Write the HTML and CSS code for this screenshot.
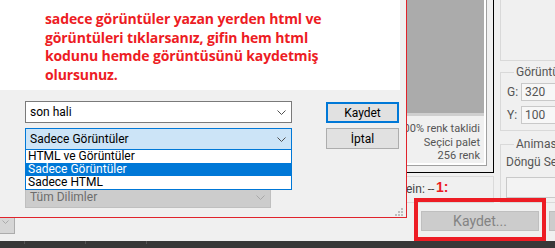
FILE: index.html
```html
<!DOCTYPE html>
<html lang="tr">
<head>
<meta charset="utf-8">
<title>Kaydet</title>
<link rel="stylesheet" href="styles.css">
</head>
<body>
<div class="screen">
  <div class="main">
    <div class="left">
      <div class="dialog">
        <div class="banner">
          <p class="note">sadece görüntüler yazan yerden html ve<br>görüntüleri tıklarsanız, gifin hem html<br>kodunu hemde görüntüsünü kaydetmiş<br>olursunuz.</p>
        </div>
        <div class="dbody">
          <div class="fields">
            <div class="combo">
              <span>son hali</span>
              <svg class="chev" width="9" height="5" viewBox="0 0 9 5"><polyline points="0.5,0.5 4.5,4.5 8.5,0.5" fill="none" stroke="#505050" stroke-width="1"/></svg>
            </div>
            <div class="combo open">
              <span>Sadece Görüntüler</span>
              <svg class="chev" width="9" height="5" viewBox="0 0 9 5"><polyline points="0.5,0.5 4.5,4.5 8.5,0.5" fill="none" stroke="#505050" stroke-width="1"/></svg>
              <div class="list">
                <div class="item">HTML ve Görüntüler</div>
                <div class="item sel">Sadece Görüntüler</div>
                <div class="item">Sadece HTML</div>
              </div>
            </div>
            <div class="combo disabled">
              <span>Tüm Dilimler</span>
              <svg class="chev" width="9" height="5" viewBox="0 0 9 5"><polyline points="0.5,0.5 4.5,4.5 8.5,0.5" fill="none" stroke="#a8a8a8" stroke-width="1"/></svg>
            </div>
          </div>
          <div class="btns">
            <div class="btn default">Kaydet</div>
            <div class="btn">İptal</div>
          </div>
        </div>
        <div class="dfoot">
          <svg width="8" height="8" viewBox="0 0 8 8" fill="#bdbdbd"><rect x="6" y="0" width="2" height="2"/><rect x="3" y="3" width="2" height="2"/><rect x="6" y="3" width="2" height="2"/><rect x="0" y="6" width="2" height="2"/><rect x="3" y="6" width="2" height="2"/><rect x="6" y="6" width="2" height="2"/></svg>
        </div>
      </div>
      <div class="under">
        <div class="stub">
          <svg width="7" height="4" viewBox="0 0 7 4"><polyline points="0.5,0.5 3.5,3.5 6.5,0.5" fill="none" stroke="#ababab" stroke-width="1"/></svg>
        </div>
      </div>
    </div>
    <div class="right">
      <div class="upper">
        <div class="pvcol">
          <div class="preview">
            <div class="pv-inner">
              <div class="pv-face">
                <div class="pv-img"></div>
                <div class="pv-info">
                  <span>100% renk taklidi</span>
                  <span>Seçici palet</span>
                  <span>256 renk</span>
                </div>
              </div>
            </div>
          </div>
          <div class="sizebox"><span class="sizetext">ein: --</span></div>
        </div>
        <div class="panel">
          <div class="topbox"></div>
          <fieldset class="grp">
            <legend>Görüntü Boyutu</legend>
            <div class="row"><span class="lbl">G:</span><span class="inp">320</span></div>
            <div class="row second"><span class="lbl">Y:</span><span class="inp">100</span></div>
          </fieldset>
          <fieldset class="grp anim">
            <legend>Animasyon</legend>
            <div class="loop">Döngü Seçenekleri:</div>
            <div class="loopbox"></div>
          </fieldset>
        </div>
      </div>
      <div class="btnrow">
        <div class="pbtn">Kaydet...</div>
        <div class="pbtn second">İptal</div>
      </div>
      <div class="redbox"></div>
      <span class="mark">1:</span>
    </div>
  </div>
  <div class="taskbar">
    <div class="tb-seg first"></div>
    <div class="tb-seg"></div>
    <div class="tb-seg"></div>
  </div>
</div>
</body>
</html>
```

FILE: styles.css
```css
* { box-sizing: border-box; }
html, body { margin: 0; padding: 0; }
body {
  background: #f0f0f0;
  font-family: Roboto, "Noto Sans", sans-serif;
  font-size: 12px;
  color: #000;
}
.screen {
  width: 555px;
  height: 248px;
  display: flex;
  flex-direction: column;
  overflow: hidden;
}
.main { display: flex; height: 241px; }

/* ---------- dialog ---------- */
.left { width: 407px; flex-shrink: 0; display: flex; flex-direction: column; }
.dialog {
  height: 218px;
  border-right: 1px solid #e0232b;
  border-bottom: 1px solid #e0232b;
  background: #f0f0f0;
  display: flex;
  flex-direction: column;
}
.banner {
  width: 400px;
  height: 90px;
  flex-shrink: 0;
  background: #fff;
  padding: 10px 0 0 45px;
}
.note {
  margin: 0;
  font-family: "Open Sans", sans-serif;
  font-weight: bold;
  font-size: 14px;
  line-height: 18.5px;
  letter-spacing: -0.12px;
  color: #ed1c24;
  white-space: nowrap;
}
.dbody {
  flex: 1;
  display: flex;
  gap: 34px;
  padding: 11px 0 0 25px;
}
.fields { width: 267px; display: flex; flex-direction: column; }
.combo {
  position: relative;
  height: 22px;
  border: 1px solid #7a7a7a;
  background: #fff;
  display: flex;
  align-items: center;
  justify-content: space-between;
  padding: 0 5px 0 4px;
  white-space: nowrap;
}
.combo.open {
  margin-top: 5px;
  border-color: #0078d7;
  background: #cce4f7;
}
.combo.disabled {
  margin-top: 36px;
  width: 246px;
  background: #cccccc;
  border-color: #bfbfbf;
  color: #6d6d6d;
}
.chev { display: block; }
.list {
  position: absolute;
  top: calc(100% + 1px);
  left: -1px;
  width: 267px;
  background: #fff;
  border: 1px solid #0078d7;
  border-top: none;
  z-index: 2;
}
.item { height: 13px; line-height: 13px; padding-left: 2px; }
.item.sel { background: #0078d7; color: #fff; }

.btns { display: flex; flex-direction: column; gap: 5px; padding-top: 1px; }
.btn {
  width: 73px;
  height: 21px;
  background: #e1e1e1;
  border: 1px solid #adadad;
  display: flex;
  align-items: center;
  justify-content: center;
}
.btn.default { border: 2px solid #0078d7; }
.dfoot {
  display: flex;
  justify-content: flex-end;
  padding: 0 3px 1px 0;
}
.dfoot svg { display: block; }

.under { flex: 1; }
.stub {
  width: 15px;
  height: 16px;
  background: #d6d6d6;
  border-right: 1px solid #acacac;
  border-bottom: 1px solid #acacac;
  padding: 2px 0 0 2px;
}
.stub svg { display: block; }

/* ---------- background application ---------- */
.right {
  position: relative;
  width: 148px;
  flex-shrink: 0;
  display: flex;
  flex-direction: column;
}
.upper { display: flex; align-items: flex-start; }
.pvcol { width: 87px; display: flex; flex-direction: column; }
.preview {
  height: 173px;
  border-right: 1px solid #000;
  border-bottom: 1px solid #000;
}
.pv-inner {
  width: 80px;
  height: 166px;
  border-right: 1px solid #a0a0a0;
  border-bottom: 1px solid #a0a0a0;
}
.pv-face {
  height: 100%;
  border-right: 2px solid #fff;
  border-bottom: 2px solid #fff;
  display: flex;
  flex-direction: column;
  overflow: hidden;
}
.pv-img {
  height: 116px;
  flex-shrink: 0;
  background: #ababab;
  border-bottom: 3px solid #cfcfcf;
}
.pv-info {
  display: flex;
  flex-direction: column;
  align-items: flex-end;
  padding: 6px 4px 0 0;
  font-size: 11px;
  line-height: 13.5px;
  color: #555;
}
.pv-info span { white-space: nowrap; flex-shrink: 0; }
.sizebox {
  margin-top: 3px;
  height: 27px;
  border: 1px solid #dadada;
  border-left: none;
  padding-top: 5px;
  white-space: nowrap;
  overflow: hidden;
  color: #444;
  line-height: 14px;
}
.sizetext { margin-left: -1px; }

.panel { width: 61px; padding-left: 6px; overflow: hidden; }
.topbox {
  height: 61px;
  border-left: 1px solid #d9d9d9;
  border-bottom: 1px solid #d9d9d9;
}
.grp {
  margin: 4px 0 0 0;
  padding: 0 0 6px 6px;
  border: 1px solid #d9d9d9;
  border-right: none;
  min-width: 0;
  width: 80px;
  color: #555;
}
.grp legend {
  margin-left: 7px;
  padding: 0 2px;
  line-height: 14px;
  white-space: nowrap;
}
.row { display: flex; align-items: center; margin-top: 4px; height: 18px; }
.row.second { margin-top: 5px; }
.lbl { width: 14px; flex-shrink: 0; }
.inp {
  flex: 1;
  height: 18px;
  border: 1px solid #c9c9c9;
  background: #f7f7f7;
  padding-left: 3px;
  line-height: 16px;
}
.grp.anim { margin-top: 6px; padding: 0 0 4px 5px; }
.grp.anim legend { margin-left: 8px; }
.loop { margin-top: 4px; line-height: 14px; white-space: nowrap; }
.loopbox {
  margin-top: 8px;
  height: 21px;
  border: 1px solid #c9c9c9;
  background: #f3f3f3;
}

.btnrow { display: flex; gap: 10px; margin-top: 8px; padding-left: 14px; }
.pbtn {
  flex-shrink: 0;
  width: 118px;
  height: 20px;
  background: #cccccc;
  border: 1px solid #bfbfbf;
  color: #838383;
  font-size: 14px;
  display: flex;
  align-items: center;
  justify-content: center;
}
.pbtn.second { width: 60px; }

.redbox {
  position: absolute;
  left: 7px;
  top: 198px;
  width: 132px;
  height: 43px;
  border: 4px solid #ed1c24;
}
.mark {
  position: absolute;
  left: 29px;
  top: 180px;
  font-family: "Liberation Sans", sans-serif;
  font-weight: bold;
  font-size: 14px;
  line-height: 14px;
  color: #ed1c24;
}

/* ---------- taskbar ---------- */
.taskbar {
  height: 7px;
  background: #383838;
  display: flex;
  align-items: flex-start;
}
.tb-seg {
  width: 61px;
  height: 3px;
  border-right: 1px solid #555;
}
.tb-seg.first { width: 25px; }
```
